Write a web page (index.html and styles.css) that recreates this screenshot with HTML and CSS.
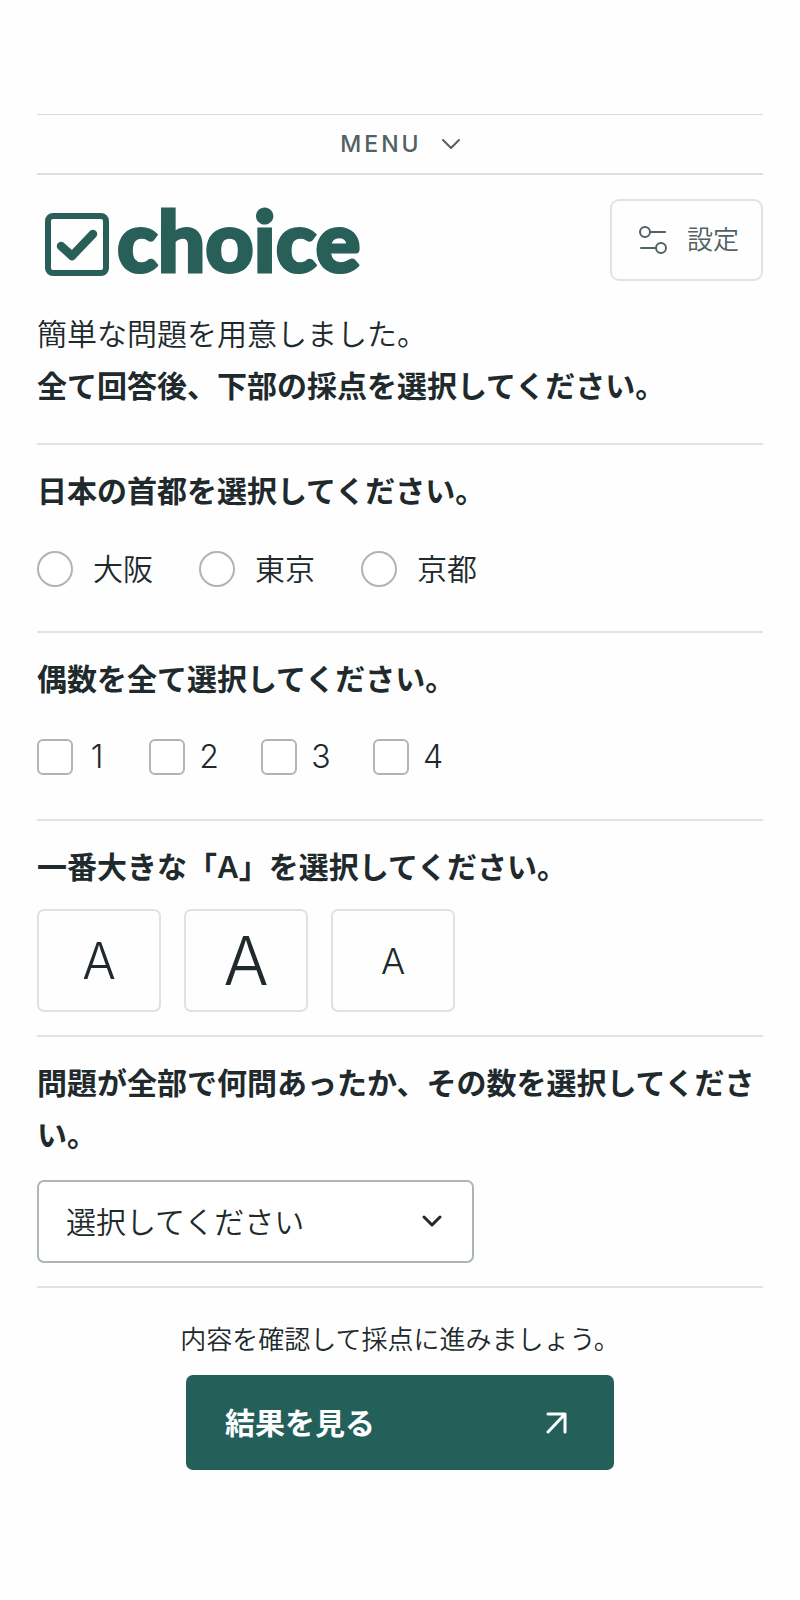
FILE: index.html
```
<!DOCTYPE html>
<html lang="ja">
<head>
  <meta charset="UTF-8" />
  <meta name="viewport" content="width=device-width, initial-scale=1" />
  <title>choice</title>
  <link rel="stylesheet" href="styles.css">
</head>
<body>
  <div class="page">
    <nav class="menu">
      <button type="button" class="menu-btn">
        <span>MENU</span>
        <svg class="menu-icon" viewBox="0 0 18 12" aria-hidden="true"><path d="M1 2l8 8 8-8" /></svg>
      </button>
    </nav>

    <header class="header">
      <a href="#" class="logo">
        <svg class="logo-mark" viewBox="0 0 64 64" aria-hidden="true">
          <rect x="3" y="3" width="58" height="57" rx="5" stroke-width="6" />
          <path d="M16 33l11 10 21-22" stroke-width="8.5" />
        </svg>
        <span class="logo-text">choice</span>
      </a>
      <button type="button" class="settings-btn">
        <svg class="settings-icon" viewBox="0 0 28 28" aria-hidden="true">
          <circle cx="6" cy="6" r="5" />
          <path d="M11 6h15M2 22h14" />
          <circle cx="22" cy="22" r="5" />
        </svg>
        <span>設定</span>
      </button>
    </header>

    <main>
      <div class="intro">
        <p>簡単な問題を用意しました。</p>
        <p class="strong">全て回答後、下部の採点を選択してください。</p>
      </div>

      <form>
        <fieldset class="question">
          <legend class="question-title">日本の首都を選択してください。</legend>
          <div class="options">
            <label class="option"><input type="radio" name="capital" value="osaka"><span>大阪</span></label>
            <label class="option"><input type="radio" name="capital" value="tokyo"><span>東京</span></label>
            <label class="option"><input type="radio" name="capital" value="kyoto"><span>京都</span></label>
          </div>
        </fieldset>

        <fieldset class="question">
          <legend class="question-title">偶数を全て選択してください。</legend>
          <div class="options numbers">
            <label class="option"><input type="checkbox" name="even" value="1"><span>1</span></label>
            <label class="option"><input type="checkbox" name="even" value="2"><span>2</span></label>
            <label class="option"><input type="checkbox" name="even" value="3"><span>3</span></label>
            <label class="option"><input type="checkbox" name="even" value="4"><span>4</span></label>
          </div>
        </fieldset>

        <fieldset class="question">
          <legend class="question-title">一番大きな「A」を選択してください。</legend>
          <div class="tiles">
            <button type="button" class="tile medium">A</button>
            <button type="button" class="tile large">A</button>
            <button type="button" class="tile small">A</button>
          </div>
        </fieldset>

        <div class="question">
          <label class="question-title" for="total">問題が全部で何問あったか、その数を選択してください。</label>
          <div class="select-box">
            <select id="total" name="total">
              <option value="">選択してください</option>
              <option value="3">3</option>
              <option value="4">4</option>
              <option value="5">5</option>
            </select>
            <svg class="select-icon" viewBox="0 0 20 14" aria-hidden="true"><path d="M2 3l8 8 8-8" /></svg>
          </div>
        </div>

        <div class="finish">
          <p class="note">内容を確認して採点に進みましょう。</p>
          <button type="button" class="submit-btn">
            <span>結果を見る</span>
            <svg class="submit-icon" viewBox="0 0 22 22" aria-hidden="true"><path d="M2 2h17v18M19 2L2 20" /></svg>
          </button>
        </div>
      </form>
    </main>
  </div>
</body>
</html>
```
FILE: styles.css
```
* {
  box-sizing: border-box;
}

body {
  margin: 0;
  background: #fefefe;
  color: #20292c;
  font-family: Inter, "Noto Sans CJK JP", sans-serif;
  font-size: 30px;
  font-weight: 350;
  line-height: 52px;
}

p {
  margin: 0;
}

button,
select {
  font: inherit;
  color: inherit;
  cursor: pointer;
}

svg {
  display: block;
  flex: none;
  fill: none;
  stroke: currentColor;
  stroke-width: 2;
  stroke-linecap: round;
  stroke-linejoin: round;
}

.page {
  padding: 114px 37px 80px;
}

/* menu */
.menu {
  border-top: 1px solid #d6dbdb;
  border-bottom: 2px solid #dce0e0;
}

.menu-btn {
  display: flex;
  align-items: center;
  justify-content: center;
  gap: 20px;
  width: 100%;
  height: 58px;
  padding: 0;
  border: none;
  background: none;
  color: #526164;
  font-size: 23px;
  font-weight: 500;
  letter-spacing: 3px;
}

.menu-icon {
  width: 18px;
  height: 12px;
}

/* header */
.header {
  display: flex;
  align-items: center;
  justify-content: space-between;
  padding-top: 24px;
}

.logo {
  display: flex;
  align-items: center;
  gap: 8px;
  padding-left: 8px;
  color: #285f59;
  text-decoration: none;
}

.logo-mark {
  width: 64px;
  height: 64px;
  margin-top: 10px;
}

.logo-text {
  font-family: Lato, sans-serif;
  font-size: 84px;
  font-weight: 900;
  line-height: 82px;
  -webkit-text-stroke: 3px currentColor;
}

.settings-btn {
  display: flex;
  align-items: center;
  gap: 20px;
  height: 82px;
  padding: 0 22px 0 27px;
  border: 2px solid #e0e3e3;
  border-radius: 9px;
  background: none;
  color: #526164;
  font-size: 26px;
}

.settings-icon {
  width: 28px;
  height: 28px;
}

.intro {
  padding: 27px 0 31px;
}

.strong,
.question-title {
  font-weight: 600;
}

/* questions */
.question {
  min-width: 0;
  margin: 0;
  padding: 20px 0 23px;
  border: 0;
  border-top: 2px solid #e0e3e3;
}

.question-title {
  display: block;
  float: left;
  width: 100%;
  padding: 0 0 1px;
}

.options,
.tiles,
.select-box {
  clear: both;
}

.options {
  display: flex;
  flex-wrap: wrap;
  gap: 46px;
  padding: 33px 0 21px;
}

.option {
  display: flex;
  align-items: center;
  gap: 20px;
  height: 36px;
  cursor: pointer;
}

.option input {
  appearance: none;
  width: 36px;
  height: 36px;
  margin: 0;
  border: 2px solid #acb6b4;
  border-radius: 50%;
  background: #fff;
}

.option input:checked {
  border-color: #23605a;
  background: #23605a;
}

.numbers {
  gap: 42px;
}

.numbers .option {
  gap: 14px;
}

.numbers .option input {
  border-radius: 6px;
}

.numbers .option span {
  min-width: 20px;
  font-size: 32px;
  text-align: center;
}

.tiles {
  display: flex;
  gap: 23px;
  padding-top: 15px;
}

.tile {
  width: 124px;
  height: 103px;
  padding: 0;
  border: 2px solid #dfe2e2;
  border-radius: 7px;
  background: none;
}

.tile.small {
  font-size: 36px;
}

.tile.medium {
  font-size: 50px;
}

.tile.large {
  font-size: 67px;
}

.select-box {
  position: relative;
  max-width: 437px;
  padding-top: 18px;
}

.select-box select {
  display: block;
  appearance: none;
  width: 100%;
  height: 83px;
  padding: 0 72px 0 27px;
  border: 2px solid #acb6b4;
  border-radius: 7px;
  background: #fff;
}

.select-icon {
  position: absolute;
  right: 32px;
  bottom: 35px;
  width: 20px;
  height: 14px;
  stroke-width: 3;
}

/* finish */
.finish {
  display: flex;
  flex-direction: column;
  align-items: center;
  gap: 15px;
  padding-top: 32px;
  border-top: 2px solid #e0e3e3;
}

.note {
  font-size: 26px;
  line-height: 40px;
}

.submit-btn {
  display: flex;
  align-items: center;
  justify-content: space-between;
  width: 100%;
  max-width: 428px;
  height: 95px;
  padding: 0 46px 0 39px;
  border: none;
  border-radius: 7px;
  background: #23605a;
  color: #fff;
  font-weight: 600;
}

.submit-icon {
  width: 22px;
  height: 22px;
  stroke-width: 3;
}

.select-icon,
.submit-icon {
  pointer-events: none;
}
```
